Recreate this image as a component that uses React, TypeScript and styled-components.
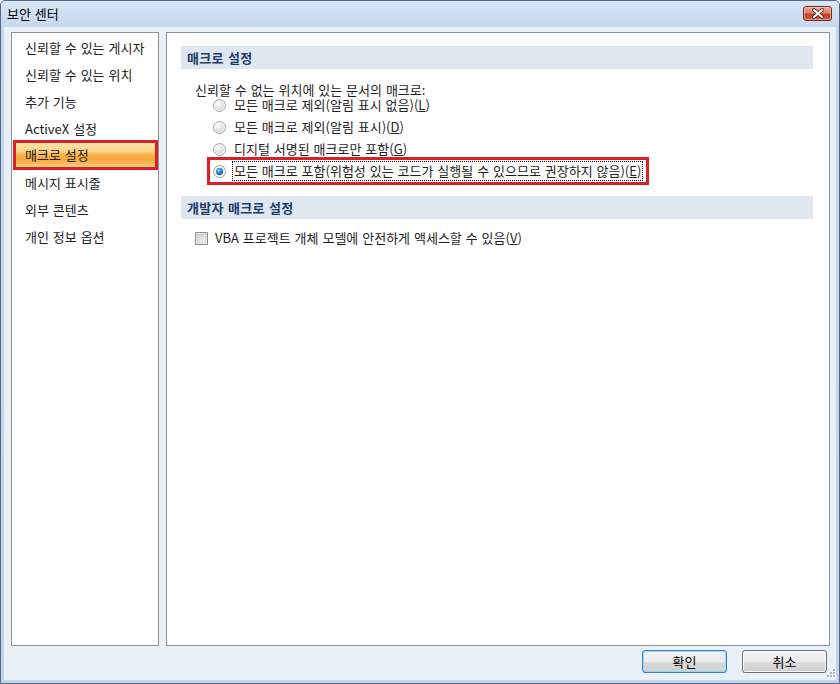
import React from 'react';
import styled, { createGlobalStyle, css } from 'styled-components';

const GlobalStyle = createGlobalStyle`
  html, body { margin: 0; padding: 0; background: #ffffff; }
  body {
    font-family: "Noto Sans CJK KR", "Noto Sans", sans-serif;
    font-size: 13px;
    word-spacing: 1px;
    color: #1e1e1e;
  }
  * { box-sizing: border-box; }
`;

const Window = styled.div`
  position: relative;
  width: 840px;
  height: 684px;
  display: flex;
  flex-direction: column;
  border: 1px solid #56698a;
  border-radius: 5px 5px 0 0;
  background: linear-gradient(to bottom, #d9e5f4 0px, #c6d8ed 26px, #c1d4eb 100%);
  padding: 0 3px 3px 3px;
`;

const TitleBar = styled.div`
  height: 26px;
  display: flex;
  align-items: center;
  padding-left: 3px;
  padding-right: 4px;
`;

const Title = styled.span`
  font-size: 13px;
  color: #000;
  line-height: 16px;
`;

const CloseButton = styled.div`
  margin-left: auto;
  margin-top: -2px;
  width: 29px;
  height: 15px;
  border: 1px solid #7a2a22;
  border-radius: 3px;
  background: linear-gradient(to bottom, #eba999 0%, #dc806c 45%, #c2402c 55%, #cc5a42 100%);
  display: flex;
  align-items: center;
  justify-content: center;
  box-shadow: inset 0 0 0 1px rgba(255, 215, 205, 0.5);
`;

const Client = styled.div`
  flex: 1;
  display: flex;
  flex-direction: column;
  background: #eaf0f8;
  padding: 5px 6px 7px 7px;
  position: relative;
`;

const Body = styled.div`
  display: flex;
  gap: 7px;
  height: 614px;
`;

const Nav = styled.div`
  width: 148px;
  background: #ffffff;
  border: 1px solid #8c9097;
  padding: 1px 2px 0 3px;
  display: flex;
  flex-direction: column;
`;

const NavItem = styled.div<{ $selected?: boolean }>`
  height: 27px;
  line-height: 27px;
  padding-left: 10px;
  color: #222;
  white-space: nowrap;
  ${(p) =>
    p.$selected &&
    css`
      height: 26px;
      line-height: 26px;
      margin-bottom: 1px;
      background: linear-gradient(
        to bottom,
        #fde9b4 0%,
        #fbd386 35%,
        #f8b44c 50%,
        #f7a73a 65%,
        #fbd287 100%
      );
      outline: 3px solid #dc1f26;
      outline-offset: -1px;
    `}
`;

const Content = styled.div`
  flex: 1;
  background: #ffffff;
  border: 1px solid #8c9097;
  padding: 13px 16px 0 14px;
  display: flex;
  flex-direction: column;
`;

const SectionHeader = styled.div<{ $gap?: number }>`
  height: 23px;
  line-height: 23px;
  padding-left: 6px;
  background: #dee7f0;
  color: #1f3b6a;
  font-weight: bold;
  letter-spacing: 0.3px;
  margin-top: ${(p) => p.$gap ?? 0}px;
`;

const Prompt = styled.div`
  margin-top: 14px;
  margin-left: 14px;
  height: 14px;
  line-height: 14px;
`;

const RadioGroup = styled.div`
  margin-left: 32px;
  display: flex;
  flex-direction: column;
  gap: 6px;
  align-items: flex-start;
`;

const OptionRow = styled.div<{ $marked?: boolean }>`
  height: 16px;
  display: inline-flex;
  align-items: center;
  white-space: nowrap;
  ${(p) =>
    p.$marked &&
    css`
      outline: 3px solid #dc1f26;
      outline-offset: 3px;
    `}
`;

const OptionLabel = styled.span<{ $focused?: boolean }>`
  margin-left: 6px;
  padding: 0 1px;
  height: ${(p) => (p.$focused ? 20 : 16)}px;
  line-height: ${(p) => (p.$focused ? 18 : 14)}px;
  border: 1px dotted ${(p) => (p.$focused ? '#000' : 'transparent')};
`;

const Key = styled.u`
  text-underline-offset: 1px;
`;

const CheckRow = styled.div`
  margin-top: 11px;
  margin-left: 14px;
  height: 16px;
  display: flex;
  align-items: center;
  white-space: nowrap;
`;

const CheckLabel = styled.span`
  margin-left: 7px;
  line-height: 16px;
`;

const Footer = styled.div`
  margin-top: 4px;
  height: 23px;
  display: flex;
  justify-content: flex-end;
  gap: 15px;
  padding-right: 3px;
`;

const Button = styled.div<{ $default?: boolean }>`
  width: 85px;
  height: 23px;
  border-radius: 3px;
  border: 1px solid ${(p) => (p.$default ? '#3c7fb1' : '#707070')};
  background: linear-gradient(to bottom, #f2f2f2 0%, #ebebeb 50%, #dddddd 51%, #cfcfcf 100%);
  display: flex;
  align-items: center;
  justify-content: center;
  color: #000;
  box-shadow: inset 0 0 0 1px ${(p) => (p.$default ? '#96d9f9' : 'rgba(255,255,255,0.8)')};
`;

const Gripper = styled.svg`
  position: absolute;
  right: 0px;
  bottom: 0px;
`;

function Radio({ checked }: { checked?: boolean }) {
  return (
    <svg width="13" height="13" viewBox="0 0 13 13">
      <defs>
        <radialGradient id="rbg" cx="0.35" cy="0.3" r="0.8">
          <stop offset="0" stopColor="#ffffff" />
          <stop offset="1" stopColor="#cfd2d6" />
        </radialGradient>
        <radialGradient id="rdot" cx="0.4" cy="0.35" r="0.7">
          <stop offset="0" stopColor="#9fe0fb" />
          <stop offset="0.5" stopColor="#2a86cf" />
          <stop offset="1" stopColor="#0d4e91" />
        </radialGradient>
      </defs>
      <circle cx="6.5" cy="6.5" r="6" fill="#f4f4f4" stroke="#a3a6aa" strokeWidth="1" />
      <circle cx="6.5" cy="6.5" r="4.2" fill="url(#rbg)" />
      {checked && <circle cx="6.5" cy="6.5" r="3.4" fill="url(#rdot)" />}
    </svg>
  );
}

function CheckBox() {
  return (
    <svg width="13" height="13" viewBox="0 0 13 13">
      <defs>
        <linearGradient id="cbg" x1="0" y1="0" x2="1" y2="1">
          <stop offset="0" stopColor="#c9ccd1" />
          <stop offset="1" stopColor="#f4f4f5" />
        </linearGradient>
      </defs>
      <rect x="0.5" y="0.5" width="12" height="12" fill="#f6f6f6" stroke="#8f8f8f" />
      <rect x="2" y="2" width="9" height="9" fill="url(#cbg)" stroke="#b8bcc2" strokeWidth="0.6" />
    </svg>
  );
}

const navItems = [
  '신뢰할 수 있는 게시자',
  '신뢰할 수 있는 위치',
  '추가 기능',
  'ActiveX 설정',
  '매크로 설정',
  '메시지 표시줄',
  '외부 콘텐츠',
  '개인 정보 옵션',
];

const options: { text: string; key: string; checked?: boolean }[] = [
  { text: '모든 매크로 제외(알림 표시 없음)', key: 'L' },
  { text: '모든 매크로 제외(알림 표시)', key: 'D' },
  { text: '디지털 서명된 매크로만 포함', key: 'G' },
  { text: '모든 매크로 포함(위험성 있는 코드가 실행될 수 있으므로 권장하지 않음)', key: 'E', checked: true },
];

export default function App() {
  return (
    <>
      <GlobalStyle />
      <Window>
        <TitleBar>
          <Title>보안 센터</Title>
          <CloseButton>
            <svg width="14" height="11" viewBox="0 0 14 11">
              <path d="M3 2 L11 9 M11 2 L3 9" stroke="#4a2420" strokeWidth="3.6" strokeLinecap="round" />
              <path d="M3 2 L11 9 M11 2 L3 9" stroke="#ffffff" strokeWidth="2" strokeLinecap="round" />
            </svg>
          </CloseButton>
        </TitleBar>
        <Client>
          <Body>
            <Nav>
              {navItems.map((t) => (
                <NavItem key={t} $selected={t === '매크로 설정'}>
                  {t}
                </NavItem>
              ))}
            </Nav>
            <Content>
              <SectionHeader>매크로 설정</SectionHeader>
              <Prompt>신뢰할 수 없는 위치에 있는 문서의 매크로:</Prompt>
              <RadioGroup>
                {options.map((o) => (
                  <OptionRow key={o.key} $marked={o.checked}>
                    <Radio checked={o.checked} />
                    <OptionLabel $focused={o.checked}>
                      {o.text}(<Key>{o.key}</Key>)
                    </OptionLabel>
                  </OptionRow>
                ))}
              </RadioGroup>
              <SectionHeader $gap={17}>개발자 매크로 설정</SectionHeader>
              <CheckRow>
                <CheckBox />
                <CheckLabel>
                  VBA 프로젝트 개체 모델에 안전하게 액세스할 수 있음(<Key>V</Key>)
                </CheckLabel>
              </CheckRow>
            </Content>
          </Body>
          <Footer>
            <Button $default>확인</Button>
            <Button>취소</Button>
          </Footer>
          <Gripper width="12" height="12" viewBox="0 0 12 12">
            {[
              [9, 1],
              [6, 4],
              [9, 4],
              [3, 7],
              [6, 7],
              [9, 7],
            ].map(([x, y]) => (
              <g key={`${x}-${y}`}>
                <rect x={x + 1} y={y + 1} width="2" height="2" fill="#ffffff" />
                <rect x={x} y={y} width="2" height="2" fill="#a8b4c4" />
              </g>
            ))}
          </Gripper>
        </Client>
      </Window>
    </>
  );
}
